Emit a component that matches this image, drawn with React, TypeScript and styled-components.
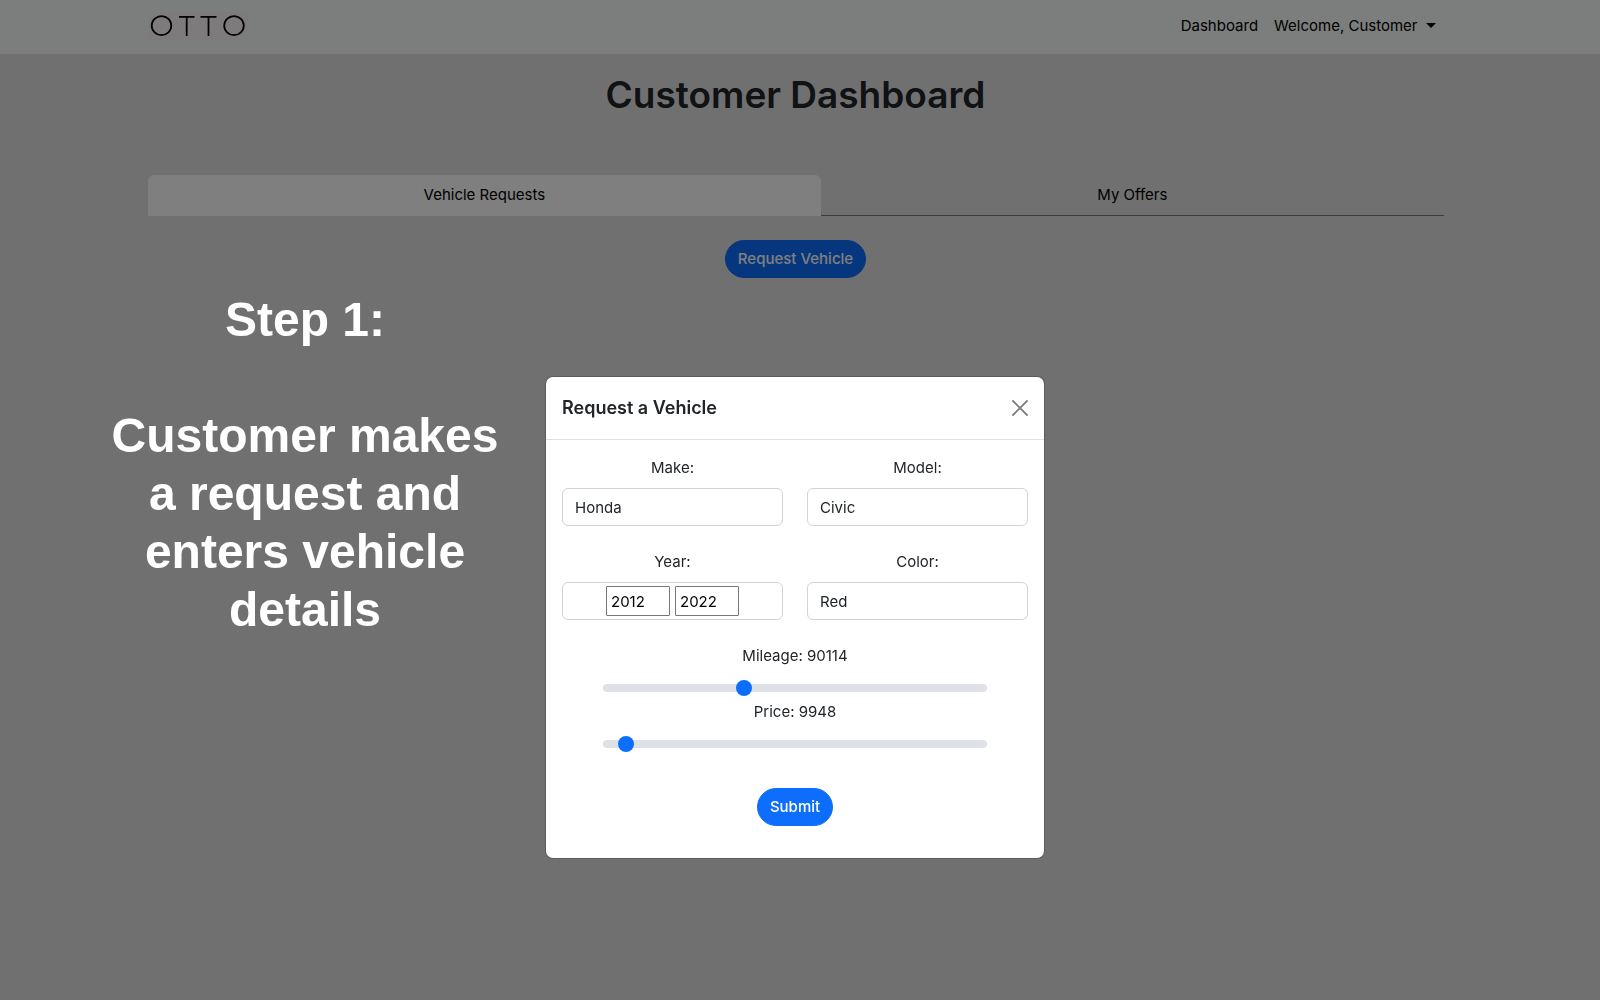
import React, { useState } from "react";
import styled, { createGlobalStyle } from "styled-components";

const GlobalStyle = createGlobalStyle`
  *, *::before, *::after { box-sizing: border-box; }
  body {
    margin: 0;
    background: #e1e1e1;
    color: #212529;
    font-family: Inter, "Liberation Sans", sans-serif;
    font-size: 15px;
    line-height: 24px;
  }
  button, input { font: inherit; }
`;

const Page = styled.div`
  min-height: 100vh;
`;

const Container = styled.div`
  max-width: 1320px;
  margin: 0 auto;
  padding: 0 12px;
`;

const Navbar = styled.header`
  background: #f7fcf8;
  padding: 6px 9px 8px 0;
`;

const NavRow = styled(Container)`
  display: flex;
  align-items: center;
  justify-content: space-between;
`;

const Brand = styled.a`
  display: flex;
`;

const NavLinks = styled.nav`
  display: flex;
`;

const NavLink = styled.a`
  display: flex;
  align-items: center;
  gap: 8px;
  padding: 8px;
  color: #000;
  text-decoration: none;
`;

const Caret = styled.span`
  margin-bottom: 2px;
  border-top: 5px solid #000;
  border-left: 5px solid transparent;
  border-right: 5px solid transparent;
`;

const Main = styled.main`
  padding: 17px 9px 48px 0;
`;

const Heading = styled.h1`
  margin: 0 0 56px;
  font-size: 37px;
  font-weight: 600;
  line-height: 48px;
  text-align: center;
`;

const Tabs = styled.div`
  display: flex;
`;

const Tab = styled.button<{ $active?: boolean }>`
  flex: 1 1 auto;
  padding: 8px 16px;
  border: 0;
  border-bottom: 1px solid ${(p) => (p.$active ? "#fff" : "#76767e")};
  border-radius: ${(p) => (p.$active ? "6px 6px 0 0" : "0")};
  background: ${(p) => (p.$active ? "#fff" : "transparent")};
  color: #000;
`;

const Actions = styled.div<{ $top: number }>`
  display: flex;
  justify-content: center;
  padding-top: ${(p) => p.$top}px;
`;

const PillButton = styled.button`
  padding: 6px 12px;
  border: 1px solid #0d6efd;
  border-radius: 20px;
  background: #0d6efd;
  color: #fff;
  font-weight: 500;
`;

const Overlay = styled.div`
  position: fixed;
  inset: 0;
  display: grid;
  grid-template-columns: 1fr 498px 1fr;
  padding-right: 10px;
  background: rgba(0, 0, 0, 0.5);
`;

const Caption = styled.section`
  justify-self: end;
  width: 400px;
  margin: 291px 41px 0 0;
  color: #fff;
  font-family: "Liberation Sans", sans-serif;
  font-size: 48px;
  font-weight: 700;
  line-height: 58px;
  text-align: center;
`;

const CaptionLine = styled.p`
  margin: 0 0 58px;
`;

const Dialog = styled.section`
  align-self: start;
  margin-top: 377px;
  border-radius: 7px;
  background: #fff;
  box-shadow: 0 0 0 1px rgba(0, 0, 0, 0.18);
`;

const DialogHeader = styled.header`
  display: flex;
  align-items: center;
  justify-content: space-between;
  padding: 16px;
  border-bottom: 1px solid #dee2e6;
`;

const DialogTitle = styled.h2`
  margin: 0;
  font-size: 18px;
  font-weight: 600;
  line-height: 30px;
`;

const CloseButton = styled.button`
  display: flex;
  padding: 0;
  border: 0;
  background: none;
  color: #000;
  opacity: 0.5;
`;

const Form = styled.form`
  padding: 16px 16px 32px;
`;

const FieldGrid = styled.div`
  display: grid;
  grid-template-columns: 1fr 1fr;
  gap: 24px;
`;

const Field = styled.div`
  display: flex;
  flex-direction: column;
  gap: 8px;
  text-align: center;
`;

const TextInput = styled.input`
  width: 100%;
  height: 38px;
  padding: 6px 12px;
  border: 1px solid #ced4da;
  border-radius: 6px;
  background: #fff;
  color: #212529;
`;

const YearBox = styled.div`
  display: flex;
  align-items: center;
  justify-content: center;
  gap: 5px;
  height: 38px;
  border: 1px solid #ced4da;
  border-radius: 6px;
`;

const YearInput = styled.input`
  width: 64px;
  height: 30px;
  padding: 2px 4px;
  border: 1px solid #767676;
  border-radius: 1px;
  background: #fff;
  color: #000;
`;

const Sliders = styled.div`
  padding: 24px 41px 0;
`;

const Range = styled.input`
  appearance: none;
  width: 100%;
  height: 24px;
  margin: 0;
  background: transparent;

  &::-webkit-slider-runnable-track {
    height: 8px;
    border-radius: 4px;
    background: #dee2e6;
  }
  &::-webkit-slider-thumb {
    appearance: none;
    width: 16px;
    height: 16px;
    margin-top: -4px;
    border-radius: 50%;
    background: #0d6efd;
  }
`;

const LIMIT = 250000;

function Logo() {
  return (
    <svg width="100" height="28" viewBox="0 0 100 28" role="img" aria-label="OTTO">
      <rect width="100" height="28" fill="#fbf7f7" />
      <g fill="none" stroke="#000" strokeWidth="1.75">
        <ellipse cx="13.5" cy="13.6" rx="9.8" ry="9.6" />
        <path d="M31 4.8H46.5M38.7 4.8V24M52.5 4.8H68.5M60.5 4.8V24" />
        <ellipse cx="86" cy="13.6" rx="9.8" ry="9.6" />
      </g>
    </svg>
  );
}

function RangeField({ id, label, initial }: { id: string; label: string; initial: number }) {
  const [value, setValue] = useState(initial);
  return (
    <Field>
      <label htmlFor={id}>{`${label}: ${value}`}</label>
      <Range
        id={id}
        type="range"
        min={0}
        max={LIMIT}
        value={value}
        onChange={(e) => setValue(Number(e.target.value))}
      />
    </Field>
  );
}

function TextField({ id, label, value }: { id: string; label: string; value: string }) {
  return (
    <Field>
      <label htmlFor={id}>{label}</label>
      <TextInput id={id} type="text" defaultValue={value} />
    </Field>
  );
}

export default function App() {
  return (
    <>
      <GlobalStyle />
      <Page>
        <Navbar>
          <NavRow>
            <Brand href="#">
              <Logo />
            </Brand>
            <NavLinks>
              <NavLink href="#">Dashboard</NavLink>
              <NavLink href="#">
                Welcome, Customer
                <Caret />
              </NavLink>
            </NavLinks>
          </NavRow>
        </Navbar>
        <Main>
          <Container>
            <Heading>Customer Dashboard</Heading>
            <Tabs role="tablist">
              <Tab role="tab" aria-selected="true" $active>
                Vehicle Requests
              </Tab>
              <Tab role="tab" aria-selected="false">
                My Offers
              </Tab>
            </Tabs>
            <Actions $top={24}>
              <PillButton type="button">Request Vehicle</PillButton>
            </Actions>
          </Container>
        </Main>
      </Page>
      <Overlay>
        <Caption>
          <CaptionLine>Step 1:</CaptionLine>
          <CaptionLine>Customer makes a request and enters vehicle details</CaptionLine>
        </Caption>
        <Dialog role="dialog" aria-labelledby="dialog-title">
          <DialogHeader>
            <DialogTitle id="dialog-title">Request a Vehicle</DialogTitle>
            <CloseButton type="button" aria-label="Close">
              <svg width="16" height="16" viewBox="0 0 16 16">
                <path
                  d="M1 1L15 15M15 1L1 15"
                  stroke="currentColor"
                  strokeWidth="1.8"
                  strokeLinecap="round"
                />
              </svg>
            </CloseButton>
          </DialogHeader>
          <Form onSubmit={(e) => e.preventDefault()}>
            <FieldGrid>
              <TextField id="make" label="Make:" value="Honda" />
              <TextField id="model" label="Model:" value="Civic" />
              <Field>
                <label htmlFor="year-from">Year:</label>
                <YearBox>
                  <YearInput id="year-from" type="text" defaultValue="2012" />
                  <YearInput aria-label="Year to" type="text" defaultValue="2022" />
                </YearBox>
              </Field>
              <TextField id="color" label="Color:" value="Red" />
            </FieldGrid>
            <Sliders>
              <RangeField id="mileage" label="Mileage" initial={90114} />
              <RangeField id="price" label="Price" initial={9948} />
            </Sliders>
            <Actions $top={32}>
              <PillButton type="submit">Submit</PillButton>
            </Actions>
          </Form>
        </Dialog>
      </Overlay>
    </>
  );
}
